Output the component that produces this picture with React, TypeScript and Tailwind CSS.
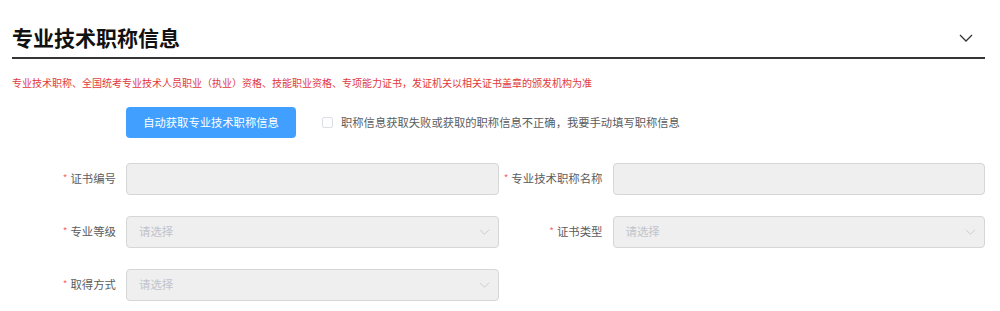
import React from "react";

const font = { fontFamily: '"Noto Sans CJK SC", "Noto Sans", sans-serif' };

function Chevron({ className }: { className?: string }) {
  return (
    <svg className={className} viewBox="0 0 14 8" fill="none">
      <path d="M1 1 L7 7 L13 1" stroke="currentColor" strokeWidth="1.3" />
    </svg>
  );
}

function Label({ text }: { text: string }) {
  return (
    <div className="w-[114px] shrink-0 pr-[10px] flex items-center justify-end text-[11.4px] text-[#5a5c60] leading-none">
      <span className="text-[#f56c6c] text-[10px] mr-[3px] -mt-[3px]">*</span>
      <span>{text}</span>
    </div>
  );
}

function Input() {
  return <div className="flex-1 h-[32px] rounded-[4px] border border-[#d6d6d6] bg-[#efefef]" />;
}

function Select() {
  return (
    <div className="flex-1 h-[32px] rounded-[4px] border border-[#d6d6d6] bg-[#efefef] flex items-center justify-between pl-[12px] pr-[8px]">
      <span className="text-[11.4px] text-[#c0c4cc] leading-none">请选择</span>
      <Chevron className="w-[11px] h-[6px] text-[#c8cad0]" />
    </div>
  );
}

export default function App() {
  return (
    <div className="w-[1000px] h-[311px] bg-white overflow-hidden" style={font}>
      <div className="ml-[12px] w-[973px]">
        <div className="h-[59px] border-b-[2.5px] border-[#353535] flex items-start justify-between pt-[24px]">
          <h1 className="text-[21px] font-bold leading-[26px] text-[#111]">专业技术职称信息</h1>
          <Chevron className="w-[14px] h-[8px] mt-[10px] mr-[12px] text-[#333]" />
        </div>
        <p className="mt-[17px] text-[10px] leading-[14px] text-[#e0393e]">
          专业技术职称、全国统考专业技术人员职业（执业）资格、技能职业资格、专项能力证书，发证机关以相关证书盖章的颁发机构为准
        </p>
        <div className="mt-[17px] ml-[114px] flex items-center">
          <button className="w-[170px] h-[31px] rounded-[4px] bg-[#419fff] text-white text-[11.3px] leading-none">
            自动获取专业技术职称信息
          </button>
          <span className="ml-[26px] w-[11px] h-[11px] border border-[#dcdfe6] rounded-[2px] bg-white" />
          <span className="ml-[8px] text-[11.3px] text-[#5a5c60] leading-none">
            职称信息获取失败或获取的职称信息不正确，我要手动填写职称信息
          </span>
        </div>
        <div className="mt-[25px] grid grid-cols-2 gap-y-[21px]">
          <div className="flex">
            <Label text="证书编号" />
            <Input />
          </div>
          <div className="flex">
            <Label text="专业技术职称名称" />
            <Input />
          </div>
          <div className="flex">
            <Label text="专业等级" />
            <Select />
          </div>
          <div className="flex">
            <Label text="证书类型" />
            <Select />
          </div>
          <div className="flex">
            <Label text="取得方式" />
            <Select />
          </div>
        </div>
      </div>
    </div>
  );
}
